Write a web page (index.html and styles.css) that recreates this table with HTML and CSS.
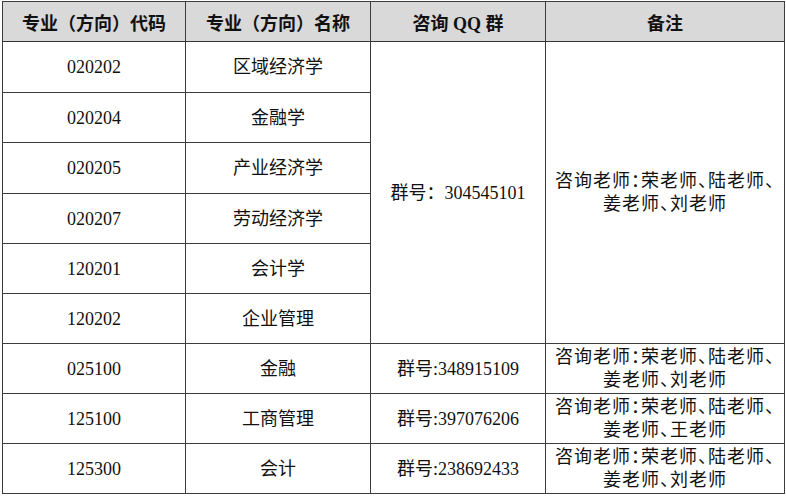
FILE: index.html
```html
<!DOCTYPE html>
<html lang="zh-CN">
<head>
<meta charset="utf-8">
<title>咨询QQ群</title>
<link rel="stylesheet" href="styles.css">
</head>
<body>
<table class="grid">
  <colgroup>
    <col class="c-code">
    <col class="c-name">
    <col class="c-qq">
    <col class="c-note">
  </colgroup>
  <thead>
    <tr class="head">
      <th>专业（方向）代码</th>
      <th>专业（方向）名称</th>
      <th>咨询 QQ 群</th>
      <th>备注</th>
    </tr>
  </thead>
  <tbody>
    <tr class="row r51">
      <td>020202</td>
      <td>区域经济学</td>
      <td rowspan="6">群号：304545101</td>
      <td rowspan="6" class="note">咨询老师：荣老师、陆老师、<br>姜老师、刘老师</td>
    </tr>
    <tr class="row"><td>020204</td><td>金融学</td></tr>
    <tr class="row r51"><td>020205</td><td>产业经济学</td></tr>
    <tr class="row"><td>020207</td><td>劳动经济学</td></tr>
    <tr class="row"><td>120201</td><td>会计学</td></tr>
    <tr class="row"><td>120202</td><td>企业管理</td></tr>
    <tr class="row">
      <td>025100</td><td>金融</td><td>群号:348915109</td>
      <td class="note">咨询老师：荣老师、陆老师、<br>姜老师、刘老师</td>
    </tr>
    <tr class="row">
      <td>125100</td><td>工商管理</td><td>群号:397076206</td>
      <td class="note">咨询老师：荣老师、陆老师、<br>姜老师、王老师</td>
    </tr>
    <tr class="row">
      <td>125300</td><td>会计</td><td>群号:238692433</td>
      <td class="note">咨询老师：荣老师、陆老师、<br>姜老师、刘老师</td>
    </tr>
  </tbody>
</table>
</body>
</html>
```

FILE: styles.css
```css
html, body {
  margin: 0;
  padding: 0;
  background: #ffffff;
}

body {
  padding: 1px 0 0 2px;
}

.grid {
  border-collapse: collapse;
  table-layout: fixed;
  width: 782px;
  font-family: "Liberation Serif", "Noto Sans CJK SC", serif;
  font-size: 18px;
  color: #111;
  border: 1px solid #5a5a5a;
}

.c-code { width: 183px; }
.c-name { width: 185px; }
.c-qq   { width: 175px; }
.c-note { width: 239px; }

.grid th,
.grid td {
  border: 1px solid #3c3c3c;
  padding: 0;
  text-align: center;
  vertical-align: middle;
}

.head th {
  height: 39px;
  background: #d9d9d9;
  font-weight: bold;
  color: #111;
  border-bottom: 1px solid #333;
}

.row td {
  height: 49px;
  line-height: 22px;
}

.row.r51 td {
  height: 50px;
}

.grid td.note {
  line-height: 23px;
  white-space: nowrap;
  letter-spacing: 1px;
  font-feature-settings: "halt" 1;
}
```
